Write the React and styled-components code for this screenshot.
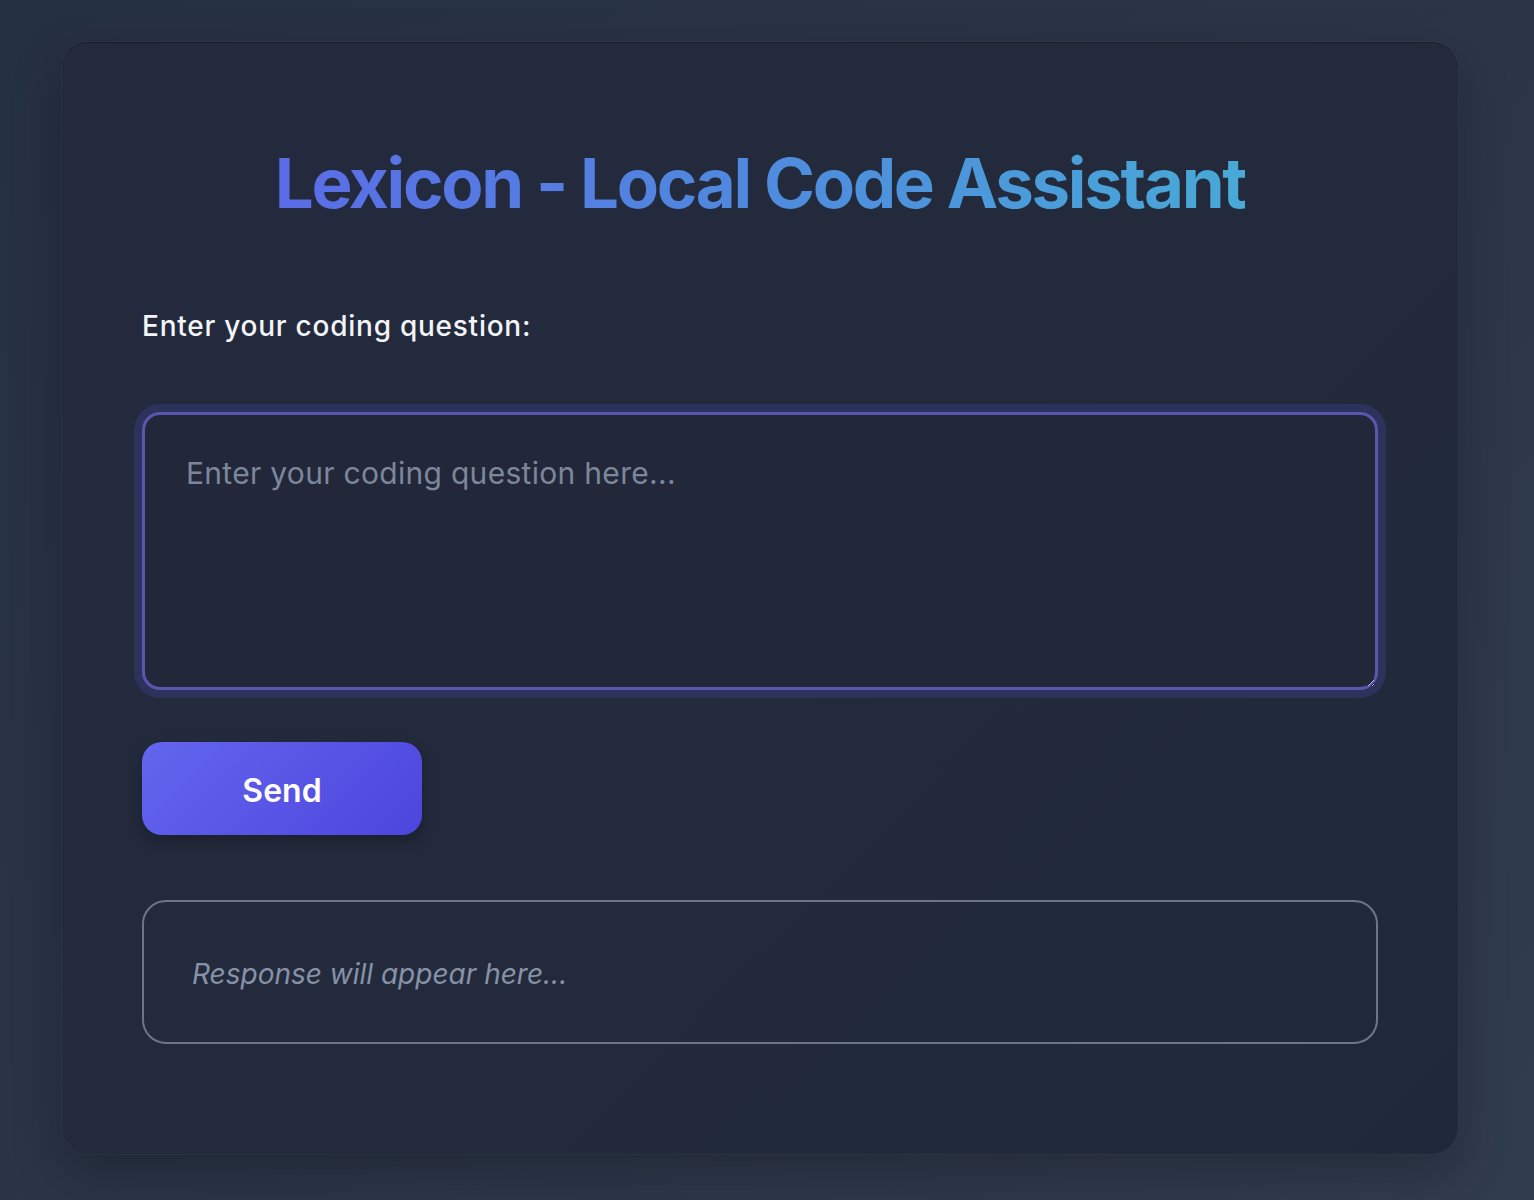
import React, { useState } from 'react';
import styled, { createGlobalStyle } from 'styled-components';

const GlobalStyle = createGlobalStyle`
  html, body {
    margin: 0;
    padding: 0;
  }

  body {
    font-family: Inter, 'Noto Sans', 'Liberation Sans', sans-serif;
    background: linear-gradient(135deg, #263043 0%, #2b3547 50%, #323c4f 100%);
    min-height: 100vh;
  }
`;

const Page = styled.div`
  min-height: 1200px;
  padding: 42px 76px 46px 62px;
  box-sizing: border-box;
`;

const Card = styled.div`
  box-sizing: border-box;
  width: 1396px;
  height: 1112px;
  padding: 97px 80px 0;
  border-radius: 26px;
  background: linear-gradient(135deg, #232a3d 0%, #222a3c 50%, #20293a 100%);
  border-top: 1px solid #1a202b;
  box-shadow: 0 0 0 1px rgba(255, 255, 255, 0.03), 0 18px 50px rgba(0, 0, 0, 0.25);
  display: flex;
  flex-direction: column;
`;

const Title = styled.h1`
  margin: 0;
  align-self: center;
  font-size: 69px;
  line-height: 86px;
  font-weight: 700;
  letter-spacing: -2.3px;
  background: linear-gradient(90deg, #5b6ce6 0%, #4f8ade 50%, #48a9d6 100%);
  -webkit-background-clip: text;
  background-clip: text;
  color: transparent;
`;

const Label = styled.label`
  margin-top: 83px;
  font-size: 28px;
  line-height: 34px;
  font-weight: 500;
  letter-spacing: 0.75px;
  color: #f3f4f8;
`;

const Question = styled.textarea`
  box-sizing: border-box;
  margin-top: 69px;
  width: 100%;
  height: 278px;
  padding: 36px 41px 30px;
  border: 3px solid #5a56ae;
  border-radius: 18px;
  background: #222839;
  color: #e5e7eb;
  font-family: inherit;
  font-size: 30px;
  line-height: 45px;
  letter-spacing: 0.3px;
  outline: none;
  box-shadow: 0 0 0 8px #2d325c;
  resize: vertical;

  &::placeholder {
    color: #7c879b;
  }
`;

const SendButton = styled.button`
  margin-top: 52px;
  width: 280px;
  height: 93px;
  padding: 4px 0 0;
  border: none;
  border-radius: 20px;
  background: linear-gradient(135deg, #6366ee 0%, #4d45dd 100%);
  color: #ffffff;
  font-family: inherit;
  font-size: 32px;
  font-weight: 600;
  box-shadow: 0 6px 14px rgba(0, 0, 0, 0.25);
  cursor: pointer;
`;

const Response = styled.div`
  box-sizing: border-box;
  margin-top: 65px;
  height: 144px;
  padding: 51px 48px 47px;
  border: 2px solid #6d7587;
  border-radius: 24px;
  font-size: 28px;
  line-height: 42px;
  font-style: italic;
  color: #8792a6;
`;

export default function App() {
  const [question, setQuestion] = useState('');

  return (
    <>
      <GlobalStyle />
      <Page>
        <Card>
          <Title>Lexicon - Local Code Assistant</Title>
          <Label htmlFor="question">Enter your coding question:</Label>
          <Question
            id="question"
            placeholder="Enter your coding question here..."
            value={question}
            onChange={e => setQuestion(e.target.value)}
          />
          <SendButton type="button">Send</SendButton>
          <Response>Response will appear here...</Response>
        </Card>
      </Page>
    </>
  );
}
